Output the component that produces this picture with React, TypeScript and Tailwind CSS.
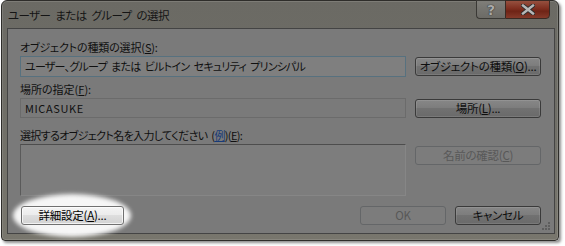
import React from 'react';

const jp = "font-['Noto_Sans_CJK_JP','Noto_Sans',sans-serif] [font-feature-settings:'palt']";

function Mn({ c }: { c: string }) {
  return <span className="underline underline-offset-[1px] decoration-[1px]">{c}</span>;
}

function WinButton({
  children,
  disabled,
  width,
  lit,
}: {
  children: React.ReactNode;
  disabled?: boolean;
  width: string;
  lit?: boolean;
}) {
  let look =
    'border-[#3a3a3a] bg-[linear-gradient(#878787,#7d7d7d_45%,#717171_50%,#6a6a6a)] text-[#0e0e0e] shadow-[inset_0_0_0_1px_rgba(255,255,255,0.1)]';
  if (disabled) look = 'border-[#646668] bg-[#7c7c7c] text-[#585858]';
  if (lit)
    look =
      'border-[#707070] bg-[linear-gradient(#f4f4f4,#ececec_45%,#dedede_50%,#d2d2d2)] text-black shadow-[inset_0_0_0_1px_rgba(255,255,255,0.7)]';
  return (
    <div
      className={`relative z-10 h-[19px] ${width} flex items-center justify-center whitespace-nowrap rounded-[3px] border text-[11.5px] tracking-[-0.25px] leading-none ${look}`}
    >
      {children}
    </div>
  );
}

export default function App() {
  return (
    <div className={`w-[565px] h-[246px] bg-white overflow-hidden ${jp}`}>
      {/* Window */}
      <div className="ml-[1px] w-[558px] h-[241px] flex flex-col rounded-t-[6px] rounded-b-[4px] border border-[#2e2d2a] bg-[linear-gradient(#6b6a64,#6e6d66_40%,#78766d)] pl-[5px] pr-[3px] pb-[6px] shadow-[2px_2px_3px_rgba(0,0,0,0.45),inset_0_0_0_1px_rgba(255,255,255,0.12)]">
        {/* Title bar */}
        <div className="h-[27px] flex items-start justify-between">
          <div className="pl-[1px] pt-[6px] text-[11.5px] tracking-[-0.6px] [word-spacing:3px] leading-[16px] text-[#151515] whitespace-nowrap">
            ユーザー または グループ の選択
          </div>
          <div className="-mt-[1px] mr-[5px] flex">
            <div className="w-[29px] h-[19px] flex items-center justify-center rounded-bl-[4px] border border-r-0 border-[#3a3935] bg-[linear-gradient(#7f7e79,#75746f_50%,#6c6b66)]">
              <span className="text-[14px] font-bold leading-none text-[#a9a9a9] [text-shadow:0_0_1px_#2a2a2a,0_0_1px_#2a2a2a] font-['DejaVu_Sans',sans-serif]">
                ?
              </span>
            </div>
            <div className="w-[45px] h-[19px] flex items-center justify-center rounded-br-[4px] border border-[#3a2a24] bg-[linear-gradient(#96503f,#7e2e1f_45%,#6f2416_60%,#853a2a)]">
              <svg width="14" height="11" viewBox="0 0 14 11">
                <path d="M2 1.5 L12 9.5 M12 1.5 L2 9.5" stroke="#2c2c2c" strokeWidth="4.2" strokeLinecap="square" />
                <path d="M2 1.5 L12 9.5 M12 1.5 L2 9.5" stroke="#b7b7b7" strokeWidth="2.4" strokeLinecap="square" />
              </svg>
            </div>
          </div>
        </div>

        {/* Client area */}
        <div className="relative flex-1 border border-[#444444] bg-[#7a7a7a] pl-[12px] pr-[13px] pt-[10px] text-[11px] text-[#101010]">
          <div className="h-[16px] leading-[16px] whitespace-nowrap tracking-[-0.15px]">
            オブジェクトの種類の選択(<Mn c="S" />):
          </div>
          <div className="mt-[1px] flex items-start justify-between">
            <div className="w-[386px] h-[21px] flex items-center border border-[#57717f] bg-[#7f7f7f] pl-[4px] whitespace-nowrap tracking-[-0.75px] [word-spacing:2.5px]">
              ユーザー、グループ または ビルトイン セキュリティ プリンシパル
            </div>
            <div className="mt-[1px]">
              <WinButton width="w-[126px]">
                オブジェクトの種類(<Mn c="O" />)...
              </WinButton>
            </div>
          </div>

          <div className="mt-[4px] h-[16px] leading-[16px] whitespace-nowrap">
            場所の指定(<Mn c="F" />):
          </div>
          <div className="mt-[1px] flex items-start justify-between">
            <div className="w-[386px] h-[20px] flex items-center border border-[#6b6b6b] bg-[#7a7a7a] pl-[4px] tracking-[0.6px]">
              MICASUKE
            </div>
            <div className="mt-[1px]">
              <WinButton width="w-[126px]">
                場所(<Mn c="L" />)...
              </WinButton>
            </div>
          </div>

          <div className="mt-[9px] h-[16px] leading-[16px] whitespace-nowrap tracking-[-0.65px] [word-spacing:2px]">
            選択するオブジェクト名を入力してください (
            <span className="text-[#173a78] underline underline-offset-[1px]">例</span>)(<Mn c="E" />):
          </div>
          <div className="mt-[1px] flex items-start justify-between">
            <div className="w-[386px] h-[52px] border border-t-[#4d4d4d] border-l-[#5a5a5a] border-r-[#868686] border-b-[#868686] bg-[#7d7d7d]" />
            <div className="mt-[2px]">
              <WinButton width="w-[126px]" disabled>
                名前の確認(<Mn c="C" />)
              </WinButton>
            </div>
          </div>

          {/* Bottom buttons */}
          <div className="mt-[10px] flex items-start justify-between">
            <div className="relative ml-[1px]">
              <div className="absolute -left-[8px] -top-[12px] w-[118px] h-[43px] rounded-[50%] bg-[#f6f6f6] blur-[2px]" />
              <WinButton width="w-[103px]" lit>
                詳細設定(<Mn c="A" />)...
              </WinButton>
            </div>
            <div className="flex gap-[9px]">
              <WinButton width="w-[86px]" disabled>
                OK
              </WinButton>
              <WinButton width="w-[86px]">キャンセル</WinButton>
            </div>
          </div>

          {/* Resize grip */}
          <svg className="absolute right-[4px] bottom-[3px]" width="8" height="8" viewBox="0 0 8 8">
            {[
              [6, 0],
              [6, 3],
              [3, 3],
              [6, 6],
              [3, 6],
              [0, 6],
            ].map(([x, y]) => (
              <rect key={`${x}-${y}`} x={x} y={y} width="2" height="2" fill="#5e5e5e" />
            ))}
          </svg>
        </div>
      </div>
    </div>
  );
}
